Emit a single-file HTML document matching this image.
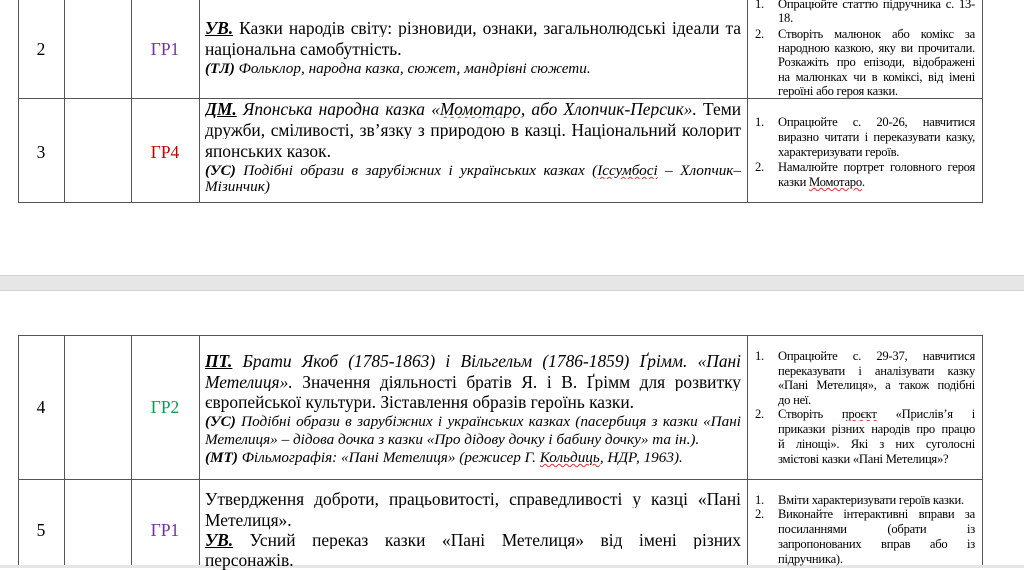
<!DOCTYPE html>
<html><head><meta charset="utf-8"><style>
body{margin:0;width:1024px;height:568px;background:#fff;position:relative;overflow:hidden;font-family:"Liberation Serif",serif;color:#000}
.v{position:absolute;width:1px;background:#555}
.h{position:absolute;height:1px;background:#555}
.l{position:absolute;white-space:nowrap;line-height:18px;height:18px}
.j{text-align:justify;text-align-last:justify;white-space:normal;overflow:hidden}
.m{font-size:17.4px}
.s{font-size:15.2px;font-style:italic;line-height:17px;height:17px}
.r{font-size:12.6px;line-height:14px;height:14px;letter-spacing:-0.25px}
.c{text-align:center}
.sq{text-decoration:underline wavy #d33;text-decoration-thickness:1px}
</style></head><body>
<div class="v" style="left:18px;top:0;height:203px"></div>
<div class="v" style="left:64px;top:0;height:203px"></div>
<div class="v" style="left:131px;top:0;height:203px"></div>
<div class="v" style="left:199px;top:0;height:203px"></div>
<div class="v" style="left:747px;top:0;height:203px"></div>
<div class="v" style="left:982px;top:0;height:203px"></div>
<div class="h" style="left:18px;top:98px;width:965px"></div>
<div class="h" style="left:18px;top:202px;width:965px"></div>

<div class="l m c" style="left:18px;width:46px;top:40px">2</div>
<div class="l m c" style="left:131px;width:68px;top:40px;color:#7030a0">ГР1</div>
<div class="l m j" style="left:205px;width:536px;top:19px"><b><i><u>УВ.</u></i></b> Казки народів світу: різновиди, ознаки, загальнолюдські ідеали та</div>
<div class="l m" style="left:205px;top:40px">національна самобутність.</div>
<div class="l s" style="left:205px;top:60px"><b>(ТЛ)</b> Фольклор, народна казка, сюжет, мандрівні сюжети.</div>

<div class="l m c" style="left:18px;width:46px;top:143px">3</div>
<div class="l m c" style="left:131px;width:68px;top:143px;color:#c00000">ГР4</div>
<div class="l m j" style="left:205px;width:536px;top:100px"><b><i><u>ДМ.</u></i></b> <i>Японська народна казка «<span class="sq">Момотаро</span>, або Хлопчик-Персик».</i> Теми</div>
<div class="l m j" style="left:205px;width:536px;top:121px">дружби, сміливості, зв’язку з природою в казці. Національний колорит</div>
<div class="l m" style="left:205px;top:142px">японських казок.</div>
<div class="l s j" style="left:205px;width:536px;top:162px"><b>(УС)</b> Подібні образи в зарубіжних і українських казках (<span class="sq">Іссумбосі</span> – Хлопчик–</div>
<div class="l s" style="left:205px;top:178px">Мізинчик)</div>

<div class="l r" style="left:755px;top:-3px">1.</div>
<div class="l r j" style="left:778px;width:197px;top:-3px">Опрацюйте статтю підручника с. 13-</div>
<div class="l r" style="left:778px;top:11px">18.</div>
<div class="l r" style="left:755px;top:27px">2.</div>
<div class="l r j" style="left:778px;width:197px;top:27px">Створіть малюнок або комікс за</div>
<div class="l r j" style="left:778px;width:197px;top:41px">народною казкою, яку ви прочитали.</div>
<div class="l r j" style="left:778px;width:197px;top:55px">Розкажіть про епізоди, відображені</div>
<div class="l r j" style="left:778px;width:197px;top:70px">на малюнках чи в коміксі, від імені</div>
<div class="l r" style="left:778px;top:84px">героїні або героя казки.</div>
<div class="l r" style="left:755px;top:115px">1.</div>
<div class="l r j" style="left:778px;width:197px;top:115px">Опрацюйте с. 20-26, навчитися</div>
<div class="l r j" style="left:778px;width:197px;top:130px">виразно читати і переказувати казку,</div>
<div class="l r" style="left:778px;top:145px">характеризувати героїв.</div>
<div class="l r" style="left:755px;top:160px">2.</div>
<div class="l r j" style="left:778px;width:197px;top:160px">Намалюйте портрет головного героя</div>
<div class="l r" style="left:778px;top:175px">казки <span class="sq">Момотаро</span>.</div>

<div style="position:absolute;left:0;top:275px;width:1024px;height:14px;background:#e6e6e6;border-top:1px solid #d0d0d0;border-bottom:1px solid #d0d0d0"></div>

<div class="h" style="left:18px;top:335px;width:965px"></div>
<div class="h" style="left:18px;top:479px;width:965px"></div>
<div class="v" style="left:18px;top:335px;height:233px"></div>
<div class="v" style="left:64px;top:335px;height:233px"></div>
<div class="v" style="left:131px;top:335px;height:233px"></div>
<div class="v" style="left:199px;top:335px;height:233px"></div>
<div class="v" style="left:747px;top:335px;height:233px"></div>
<div class="v" style="left:982px;top:335px;height:233px"></div>
<div style="position:absolute;left:0;top:565px;width:1024px;height:3px;background:#e6e6e6"></div>

<div class="l m c" style="left:18px;width:46px;top:398px">4</div>
<div class="l m c" style="left:131px;width:68px;top:398px;color:#00a050">ГР2</div>
<div class="l m j" style="left:205px;width:536px;top:352px"><b><i><u>ПТ.</u></i></b> <i>Брати Якоб (1785-1863) і Вільгельм (1786-1859) Ґрімм. «Пані</i></div>
<div class="l m j" style="left:205px;width:536px;top:373px"><i>Метелиця».</i> Значення діяльності братів Я. і В. Ґрімм для розвитку</div>
<div class="l m" style="left:205px;top:393px">європейської культури. Зіставлення образів героїнь казки.</div>
<div class="l s j" style="left:205px;width:536px;top:413px"><b>(УС)</b> Подібні образи в зарубіжних і українських казках (пасербиця з казки «Пані</div>
<div class="l s" style="left:205px;top:431px">Метелиця» – дідова дочка з казки «Про дідову дочку і бабину дочку» та ін.).</div>
<div class="l s" style="left:205px;top:449px"><b>(МТ)</b> Фільмографія: «Пані Метелиця» (режисер Г. <span class="sq">Кольдиць</span>, НДР, 1963).</div>

<div class="l m c" style="left:18px;width:46px;top:521px">5</div>
<div class="l m c" style="left:131px;width:68px;top:521px;color:#7030a0">ГР1</div>
<div class="l m j" style="left:205px;width:536px;top:490px">Утвердження доброти, працьовитості, справедливості у казці «Пані</div>
<div class="l m" style="left:205px;top:511px">Метелиця».</div>
<div class="l m j" style="left:205px;width:536px;top:531px"><b><i><u>УВ.</u></i></b> Усний переказ казки «Пані Метелиця» від імені різних</div>
<div class="l m" style="left:205px;top:551px">персонажів.</div>

<div class="l r" style="left:755px;top:349px">1.</div>
<div class="l r j" style="left:778px;width:197px;top:349px">Опрацюйте с. 29-37, навчитися</div>
<div class="l r j" style="left:778px;width:197px;top:364px">переказувати і аналізувати казку</div>
<div class="l r j" style="left:778px;width:197px;top:378px">«Пані Метелиця», а також подібні</div>
<div class="l r" style="left:778px;top:393px">до неї.</div>
<div class="l r" style="left:755px;top:407px">2.</div>
<div class="l r j" style="left:778px;width:197px;top:407px">Створіть <span class="sq">проєкт</span> «Прислів’я і</div>
<div class="l r j" style="left:778px;width:197px;top:422px">приказки різних народів про працю</div>
<div class="l r j" style="left:778px;width:197px;top:437px">й лінощі». Які з них суголосні</div>
<div class="l r" style="left:778px;top:452px">змістові казки «Пані Метелиця»?</div>
<div class="l r" style="left:755px;top:493px">1.</div>
<div class="l r" style="left:778px;top:493px">Вміти характеризувати героїв казки.</div>
<div class="l r" style="left:755px;top:507px">2.</div>
<div class="l r j" style="left:778px;width:197px;top:507px">Виконайте інтерактивні вправи за</div>
<div class="l r j" style="left:778px;width:197px;top:522px">посиланнями (обрати із</div>
<div class="l r j" style="left:778px;width:197px;top:537px">запропонованих вправ або із</div>
<div class="l r" style="left:778px;top:552px">підручника).</div>
</body></html>
